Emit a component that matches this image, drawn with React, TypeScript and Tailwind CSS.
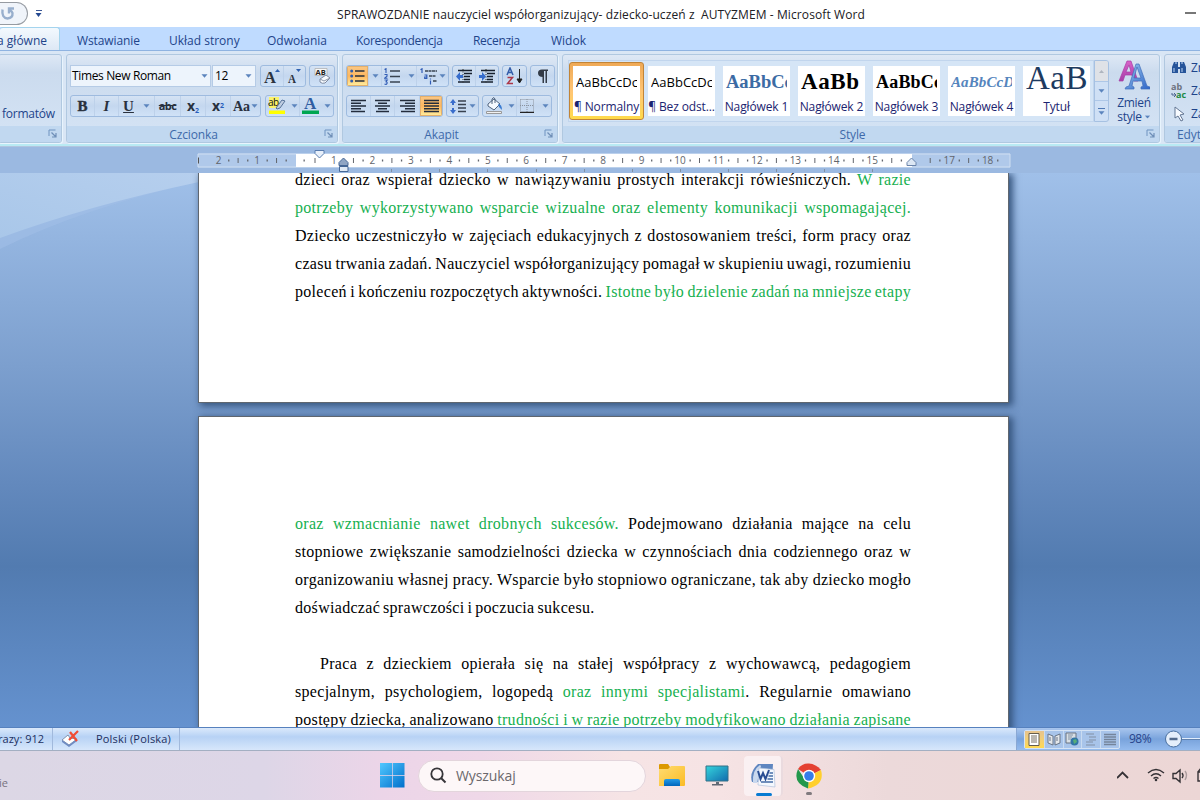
import type { ReactNode } from "react";

const Arrow = ({ className = "" }: { className?: string }) => (
  <svg className={`shrink-0 ${className}`} width="7" height="4" viewBox="0 0 7 4">
    <path d="M.5 .3h6L3.5 3.7z" fill="#5b84bd" />
  </svg>
);

const Launcher = () => (
  <svg width="9" height="9" viewBox="0 0 9 9" className="absolute right-[4px] top-[3px]">
    <path d="M1 7V1h6.5" fill="none" stroke="#6f93c0" />
    <path d="M8 4v4H4M3.5 3.5l4 4" fill="none" stroke="#6f8fb8" strokeWidth="1.2" />
  </svg>
);

function Group({ label, width, body, children }: { label: string; width: string; body: string; children?: ReactNode }) {
  return (
    <div className={`flex h-[89px] shrink-0 flex-col overflow-hidden rounded-[3px] border border-[#b0c8e0] bg-gradient-to-b from-[#dee8f5] via-[#cbdbee] via-20% to-[#d5e4f5] shadow-[1px_1px_0_#e8f4fd] ${width}`}>
      <div className={`h-[71px] shrink-0 ${body}`}>{children}</div>
      <div className="relative h-4 shrink-0 bg-[#c1d8f0] pr-[17px] text-center text-[12px] leading-[17px] tracking-[-0.15px] text-[#3e6aaa]">
        {label}
        <Launcher />
      </div>
    </div>
  );
}

const Set = ({ w, children }: { w: string; children: ReactNode }) => (
  <div className={`flex h-[22px] shrink-0 items-center overflow-hidden rounded-[3px] border border-[#9ebbdf] bg-gradient-to-b from-[#d5e3f4] via-[#c4d7ef] to-[#d0e2f7] ${w}`}>{children}</div>
);

const Cell = ({ w, on = false, children }: { w: string; on?: boolean; children: ReactNode }) => (
  <div className={`flex h-full shrink-0 items-center justify-center border-r border-[#bdd1ea] last:border-r-0 ${w} ${on ? "bg-gradient-to-b from-[#fbc885] via-[#fdb75f] to-[#fff0a0] shadow-[inset_0_0_0_1px_#e3b06d]" : ""}`}>
    {children}
  </div>
);

function Align({ d }: { d: string }) {
  return (
    <svg width="15" height="14" viewBox="0 0 15 14">
      <path d={d} stroke="#222c3c" strokeWidth="1.4" />
    </svg>
  );
}

function Indent({ right = false }: { right?: boolean }) {
  return (
    <svg width="17" height="15" viewBox="0 0 17 15">
      <path d="M2 1.5h14M8 4.500h8M8 7.500h6M8 10.500h6M2 13h12" stroke="#17202e" strokeWidth="1.7" />
      <path d="M7 0v15" stroke="#333" strokeDasharray="1 1.500" />
      <path d={right ? "M0 6h3V3l4 4.500L3 12V9H0z" : "M7 6H4V3L0 7.500 4 12V9h3z"} fill="#376dcc" />
    </svg>
  );
}

function FontGroup() {
  return (
    <Group label="Czcionka" width="w-[272px]" body="flex flex-col gap-2 pl-[3px] pt-[10px]">
      <div className="flex">
        <div className="flex h-[22px] w-[141px] items-center justify-between border border-[#b5cbe6] bg-[#edf4fc] pl-[1px] pr-[2px] text-[12px] tracking-[-0.36px] text-black">
          <span>Times New Roman</span> <Arrow />
        </div>
        <div className="ml-px flex h-[22px] w-[44px] items-center justify-between border border-[#b5cbe6] bg-[#edf4fc] pl-[2px] pr-[3px] text-[12px] tracking-[-0.3px] text-black">
          <span>12</span> <Arrow />
        </div>
        <div className="w-1" />
        <Set w="w-[46px]">
          <Cell w="w-[23px]">
            <svg width="19" height="18" viewBox="0 0 19 18"><text x="1" y="15.500" fontSize="17" fontWeight="bold" fontFamily="Liberation Serif, serif" fill="#2c333e" textLength="12" lengthAdjust="spacingAndGlyphs">A</text><path d="M12 5l2.500-3L17 5z" fill="#2f61b0" /></svg>
          </Cell>
          <Cell w="w-[22px]">
            <svg width="19" height="18" viewBox="0 0 19 18"><text x="2" y="15.500" fontSize="13" fontWeight="bold" fontFamily="Liberation Serif, serif" fill="#2c333e" textLength="8" lengthAdjust="spacingAndGlyphs">A</text><path d="M10 2h5l-2.500 3z" fill="#2f61b0" /></svg>
          </Cell>
        </Set>
        <div className="w-[3px]" />
        <Set w="w-[26px]">
          <Cell w="w-[24px]">
            <svg width="18" height="18" viewBox="0 0 18 18"><path d="M2 1.500h12v7H2z" fill="#f7f7f5" stroke="#aaa" strokeWidth=".7" /><text x="2.500" y="7.700" fontSize="7.500" fontWeight="bold" fill="#222">AB</text><path d="M7 12l6-4 4 3-5 5q-3 1-5-1z" fill="#f8fbff" stroke="#7d89a0" /><path d="M7 12l4 2 6-3" fill="none" stroke="#8d98aa" /></svg>
          </Cell>
        </Set>
      </div>
      <div className="flex font-['Liberation_Serif',serif] text-[15px] font-bold text-[#29313e]">
        <Set w="w-[191px]">
          <Cell w="w-[24px]"><span className="[-webkit-text-stroke:0.4px_#29313e]">B</span></Cell>
          <Cell w="w-[24px]"><span className="italic">I</span></Cell>
          <Cell w="w-[36px]"><span className="mr-[9px] underline">U</span><Arrow /></Cell>
          <Cell w="w-[26px]"><span className="font-['Open_Sans',sans-serif] text-[11px] tracking-[-0.6px] line-through">abc</span></Cell>
          <Cell w="w-[25px]"><span className="font-['Open_Sans',sans-serif] text-[14px] leading-none">x<sub className="text-[7px] text-[#295dbc]">2</sub></span></Cell>
          <Cell w="w-[25px]"><span className="font-['Open_Sans',sans-serif] text-[14px] leading-none">x<sup className="text-[7px] text-[#295dbc]">2</sup></span></Cell>
          <Cell w="w-[29px]"><span className="text-[14px]">Aa</span><Arrow className="ml-px" /></Cell>
        </Set>
        <div className="w-1" />
        <Set w="w-[69px]">
          <Cell w="w-[34px]">
            <svg width="18" height="18" viewBox="0 0 18 18"><path d="M1 0h10v11H1z" fill="#fbf36b" /><text x="0" y="9" fontSize="10" fontWeight="400" fontFamily="Open Sans, sans-serif" fill="#111" textLength="11">ab</text><path d="M8 11l6-8 3 1-5 7-3 1z" fill="#bfcde1" stroke="#577399" /><path d="M1 13.500h16V17H1z" fill="#ff0" /></svg>
            <Arrow className="ml-[5px]" />
          </Cell>
          <Cell w="w-[33px]">
            <svg width="17" height="18" viewBox="0 0 17 18"><text x="2" y="12" fontSize="17" fontFamily="Liberation Serif, serif" fill="#305da1" textLength="12">A</text><path d="M0 13.500h17V17H0z" fill="#00a651" /></svg>
            <Arrow className="ml-[5px]" />
          </Cell>
        </Set>
      </div>
    </Group>
  );
}

function ParagraphGroup() {
  return (
    <Group label="Akapit" width="w-[216px]" body="flex flex-col gap-2 pl-[3px] pt-[10px]">
      <div className="flex">
        <Set w="w-[103px]">
          <Cell w="w-[22px]" on>
            <svg width="15" height="14" viewBox="0 0 15 14"><path d="M5 2h9.500M5 7h9.500M5 12h9.500" stroke="#27303c" strokeWidth="1.500" /><g fill="#315ca9"><circle cx="1.700" cy="2" r="1.500" /><circle cx="1.700" cy="7" r="1.500" /><circle cx="1.700" cy="12" r="1.500" /></g></svg>
          </Cell>
          <Cell w="w-[13px]"><Arrow /></Cell>
          <Cell w="w-[35px]">
            <svg width="17" height="17" viewBox="0 0 17 17"><path d="M6 3h10M6 8.500h10M6 14h10" stroke="#394351" strokeWidth="1.300" /><g fill="none" stroke="#315cb5" strokeWidth="1.100"><path d="M.5 1.500l1.500-.8V5M.5 6.500h2.500v1.700l-2.500 2h3M.5 12h2.800L2 13.800q1.500.2 1 1.700t-2.500.5" /></g></svg>
            <Arrow className="ml-[7px]" />
          </Cell>
          <Cell w="w-[31px]">
            <svg width="18" height="17" viewBox="0 0 18 17"><path d="M5 3h12M9 8h7M13 13h4" stroke="#394351" strokeWidth="1.300" strokeDasharray="3 .5" /><g fill="none" stroke="#315cb5" strokeWidth="1.200"><path d="M.5 1.700L2 .8V5M4.500 7h2.300v3.500H4.700V9h2M10.500 12.500v4M10.500 10.500v1" /></g></svg>
            <Arrow className="ml-px" />
          </Cell>
        </Set>
        <div className="w-[3px]" />
        <Set w="w-[47px]">
          <Cell w="w-[23px]"><Indent /></Cell>
          <Cell w="w-[22px]"><Indent right /></Cell>
        </Set>
        <div className="w-[3px]" />
        <Set w="w-[25px]">
          <Cell w="w-[23px]"><svg width="17" height="18" viewBox="0 0 17 18"><g fill="none" strokeWidth="1.500"><path d="M1 8l3-7 3 7M2.200 5.500h3.600" stroke="#315ca9" /><path d="M1.500 10.500h5l-5 6h5.500" stroke="#ac3748" /></g><path d="M13.500 2v13M11 12l2.500 4 2.500-4z" stroke="#222" fill="#222" /></svg></Cell>
        </Set>
        <div className="w-[3px]" />
        <Set w="w-[25px]">
          <Cell w="w-[23px]"><svg width="12" height="15" viewBox="0 0 12 15"><path d="M6 8Q1 8 1 4t5-3.500h5V2h-1v12H8.500V2H7v12H5.500V8z" fill="#333b47" /></svg></Cell>
        </Set>
      </div>
      <div className="flex">
        <Set w="w-[97px]">
          <Cell w="w-[24px]"><Align d="M0 1.500h15M0 4.250h10M0 7h15M0 9.750h10M0 12.500h14" /></Cell>
          <Cell w="w-[24px]"><Align d="M0 1.500h15M3 4.250h9M0 7h15M3 9.750h9M1 12.500h13" /></Cell>
          <Cell w="w-[25px]"><Align d="M0 1.500h15M5 4.250h10M0 7h15M5 9.750h10M1 12.500h14" /></Cell>
          <Cell w="w-[22px]" on><Align d="M0 1.500h15M0 4.250h15M0 7h15M0 9.750h15M0 12.500h15" /></Cell>
        </Set>
        <div className="w-[3px]" />
        <Set w="w-[33px]">
          <Cell w="w-[31px]">
            <svg width="17" height="17" viewBox="0 0 17 17"><path d="M8 3h8M8 6.500h8M8 10h8M8 13.500h8" stroke="#384250" strokeWidth="1.300" /><path d="M0 5l3-4 3 4H4v2H2V5zM0 12l3 4 3-4H4v-2H2v2z" fill="#3a6dcb" /></svg>
            <Arrow className="ml-[2px]" />
          </Cell>
        </Set>
        <div className="w-[3px]" />
        <Set w="w-[70px]">
          <Cell w="w-[34px]">
            <svg width="18" height="18" viewBox="0 0 18 18"><path d="M3 7l6-5 6 5-6 6-6-4z" fill="#f5f9ff" stroke="#51657f" /><path d="M7 7V2q2-3 3 0v4" fill="none" stroke="#51657f" /><path d="M13 7q4 0 4 6l-3-3z" fill="#397bd2" /><path d="M1.500 14.500h15v2h-15z" fill="#f1f1f1" stroke="#999" /></svg>
            <Arrow className="ml-[5px]" />
          </Cell>
          <Cell w="w-[34px]">
            <svg width="14" height="14" viewBox="0 0 14 14"><path d="M.5 .5h13v12M.5 .5v12M7 0v13M0 6.500h14" fill="none" stroke="#8a929e" strokeDasharray="1 1" /><path d="M0 13.500h14" stroke="#222" strokeWidth="1.400" /></svg>
            <Arrow className="ml-[8px]" />
          </Cell>
        </Set>
      </div>
    </Group>
  );
}

const styles = [
  { name: "¶ Normalny", sample: "AaBbCcDc", cls: "text-[13px] text-black tracking-[0.02px]" },
  { name: "¶ Bez odst...", sample: "AaBbCcDc", cls: "text-[13px] text-black tracking-[0.02px]" },
  { name: "Nagłówek 1", sample: "AaBbCc", cls: "font-['Liberation_Serif',serif] text-[18.5px] font-bold text-[#3c6ba4]" },
  { name: "Nagłówek 2", sample: "AaBb", cls: "font-['Liberation_Serif',serif] text-[23px] font-bold text-black tracking-[0.6px]" },
  { name: "Nagłówek 3", sample: "AaBbCc", cls: "font-['Liberation_Serif',serif] text-[18px] font-bold text-black tracking-[0.2px]" },
  { name: "Nagłówek 4", sample: "AaBbCcD", cls: "font-['Liberation_Serif',serif] text-[15px] font-bold italic text-[#5585bd] tracking-[0.1px]" },
  { name: "Tytuł", sample: "AaB", cls: "relative -top-[4px] font-['Liberation_Serif',serif] text-[33px] text-[#1d3a5f] tracking-[0.5px]" },
];

function StyleGroup() {
  return (
    <Group label="Style" width="w-[598px]" body="flex">
      <div className="ml-[5px] mt-[5px] flex h-[62px] w-[526px] border border-[#c1d5ed] bg-[#d5e5f6]">
        {styles.map((s, i) => (
          <div key={s.name} className={`mt-px h-[58px] w-[75px] shrink-0 p-[3px] ${i === 0 ? "rounded-[3px] border border-[#c18438] bg-gradient-to-b from-[#efa956] via-[#ffc574] to-[#ffda49]" : "border border-transparent"}`}>
            <div className="flex h-[50px] w-[67px] flex-col items-center bg-white">
              <div className="flex h-[32px] w-[61px] items-center overflow-hidden whitespace-nowrap">
                <span className={`leading-[30px] ${s.cls}`}>{s.sample}</span>
              </div>
              <div className="w-full whitespace-nowrap text-center text-[12px] leading-[18px] tracking-[-0.12px] text-[#1b2470]">{s.name}</div>
            </div>
          </div>
        ))}
      </div>
      <div className="mt-[5px] flex h-[62px] w-[15px] flex-col overflow-hidden rounded-r-[3px] border border-[#a6c1e2] bg-[#cfe0f5]">
        <div className="flex h-[20px] items-center justify-center bg-[#dfe2e7]"><svg width="7" height="4"><path d="M1 4l2.500-3L6 4z" fill="#aeb5bf" /></svg></div>
        <div className="flex h-[20px] items-center justify-center border-y border-[#adc7e7]"><Arrow /></div>
        <div className="flex h-[20px] flex-col items-center justify-center gap-[2px]"><div className="h-px w-[7px] bg-[#4f79b5]" /><Arrow /></div>
      </div>
      <div className="flex w-[50px] flex-col items-center pt-[5px] text-center text-[12px] leading-[14px] tracking-[-0.3px] text-[#1e448a]">
        <svg width="32" height="31" viewBox="0 0 32 31">
          <defs>
            <linearGradient id="violet" x2="0" y2="1"><stop stopColor="#d862c8" /><stop offset="1" stopColor="#a640a8" /></linearGradient>
            <linearGradient id="azure" x2="1" y2="1"><stop stopColor="#9ac7f0" /><stop offset="1" stopColor="#2e65c7" /></linearGradient>
          </defs>
          <path d="M1 21L9 1h4l7 20h-4l-2-6H7l-2 6zM8 12h5l-2-7z" fill="url(#violet)" stroke="#a83ca5" strokeWidth=".7" />
          <path d="M7 29l1-2 3-1 7-22h3l8 22 3 1v2h-9v-2l2-1-1-5h-9l-1 5 2 1v2zM16 18h7l-4-11z" fill="url(#azure)" stroke="#416fba" strokeWidth=".7" />
        </svg>
        <div className="mt-[5px]">Zmień</div>
        <div className="flex items-center gap-[2px]">style <Arrow className="scale-90" /></div>
      </div>
    </Group>
  );
}

function EditGroup() {
  return (
    <div className="flex h-[89px] w-[60px] shrink-0 flex-col overflow-hidden rounded-[3px] border border-[#b0c8e0] bg-gradient-to-b from-[#dee8f5] via-[#cbdbee] via-20% to-[#d5e4f5] text-[12px] text-[#1e448a]">
      <div className="flex h-[71px] shrink-0 flex-col gap-[2px] pl-[6px] pt-[2px]">
        <div className="flex h-[21px] items-center gap-[4px]">
          <svg width="16" height="15" viewBox="0 0 16 15"><path d="M1 13V7l2-5h4v5h2V2h4l2 5v6H9V9H7v4z" fill="#26549a" /><path d="M3 8v4M11 8v4M4 3h2M10 3h2" stroke="#bed7f5" /></svg>Zn
        </div>
        <div className="flex h-[21px] items-center gap-[4px]">
          <svg width="16" height="18" viewBox="0 0 16 18"><text x="0" y="8" fontSize="9" fontWeight="bold" fill="#6d7380">ab</text><text x="5" y="16" fontSize="9" fontWeight="bold" fill="#218a45">ac</text><path d="M1 11v2h4M3 11l2 2-2 2" fill="none" stroke="#4c6590" /></svg>Za
        </div>
        <div className="flex h-[21px] items-center gap-[4px]">
          <svg width="16" height="16" viewBox="0 0 16 16"><path d="M4 1v11l3-2 3 5 2-1-3-5 4-1z" fill="#f8fbff" stroke="#637693" /></svg>Za
        </div>
      </div>
      <div className="h-4 shrink-0 bg-[#c1d8f0] pl-[12px] leading-[17px] tracking-[-0.1px] text-[#3e6aaa]">Edyt</div>
    </div>
  );
}

const marks = Array.from({ length: 22 }, (_, i) => i - 2);

function Ruler() {
  return (
    <div className="relative h-[27px] shrink-0 border-t border-[#b2c5df] bg-[#9bb9e1]">
      <svg width="1200" height="27" viewBox="0 0 1200 27" className="block">
        <path d="M198 6.500h812v14H198z" fill="#b0c9ea" />
        <path d="M198 7h812v13H198z" fill="none" stroke="#d0dff2" />
        <path d="M296 7h616v13H296z" fill="#fff" />
        <g fill="#62656c" fontSize="10" textAnchor="middle">
          {marks.map((n) => {
            const x = 295.5 + n * 38.45;
            return (
              <g key={n}>
                {n !== 0 && n !== 16 && n < 19 && <text x={x} y="17" fontSize="10">{Math.abs(n)}</text>}
                {n < 18 && <rect x={x + 19} y="11" width="1" height="5" />}
                {n < 19 && n !== 0 && n !== 16 && <rect x={x + 9.5} y="12.500" width="1.300" height="2" />}
                {n < 18 && n !== 0 && <rect x={x + 28.500} y="12.500" width="1.300" height="2" />}
                {n === 0 && <rect x={x + 8} y="12.500" width="1.300" height="2" />}
              </g>
            );
          })}
        </g>
        <path d="M198.500 10.500v6" stroke="#555" />
        {[391, 439, 487, 536, 584, 632, 680, 728, 776, 824, 872].map((x) => <path key={x} d={`M${x}.500 22v3`} stroke="#8290a3" />)}
        <path d="M315 3.500h9v3l-4.500 4.500L315 6.500z" fill="#e8f0fb" stroke="#587cae" />
        <path d="M339 18.500v-3l4.500-4.500 4.500 4.500v3z" fill="#8fa5c4" stroke="#456796" />
        <path d="M339.500 19.500h8.500v5h-8.500z" fill="#dfe9f5" stroke="#456796" />
        <path d="M907 18.500v-3l4.500-4.500 4.500 4.500v3z" fill="#dce7f4" stroke="#6a84aa" />
      </svg>
    </div>
  );
}

const Line = ({ children, last = false, indent = false }: { children: ReactNode; last?: boolean; indent?: boolean }) => (
  <div className={`h-[28px] whitespace-nowrap tracking-[0.3px] [word-spacing:-1.3px] ${last ? "" : "[text-align-last:justify]"} ${indent ? "pl-[25px]" : ""}`}>{children}</div>
);
const Green = ({ children }: { children: ReactNode }) => <span className="text-[#16b050]">{children}</span>;

function Document() {
  return (
    <div className="relative flex h-[554px] shrink-0 flex-col items-start overflow-hidden bg-[linear-gradient(180deg,#a0c0e9_0%,#7c9fce_35%,#6389bd_56%,#527bb0_71%,#6592cf_100%)]">
      <svg className="absolute left-0 top-0" width="199" height="80" viewBox="0 0 199 80">
        <defs><linearGradient id="wave" x1="0" y1="1" x2="1" y2="0"><stop stopColor="#a9c7e9" /><stop offset="1" stopColor="#b6cfee" /></linearGradient></defs>
        <path d="M0 0h199v9Q85 34 0 76z" fill="#a3c0e7" opacity=".55" />
        <path d="M0 0h199v9Q90 32 0 65z" fill="url(#wave)" />
      </svg>
      <div className="relative ml-[198px] h-[230px] w-[811px] shrink-0 overflow-visible border border-t-0 border-[#5f666f] bg-white pl-[96px] pr-[97px] font-['Liberation_Serif',serif] text-[16px] leading-[28px] text-black shadow-[3px_2px_7px_1px_#36557f]">
        <div className="mt-[-7px]">
          <Line>dzieci oraz wspierał dziecko w nawiązywaniu prostych interakcji rówieśniczych. <Green>W razie</Green></Line>
          <Line><Green>potrzeby wykorzystywano wsparcie wizualne oraz elementy komunikacji wspomagającej.</Green></Line>
          <Line>Dziecko uczestniczyło w zajęciach edukacyjnych z dostosowaniem treści, form pracy oraz</Line>
          <Line>czasu trwania zadań. Nauczyciel współorganizujący pomagał w skupieniu uwagi, rozumieniu</Line>
          <Line>poleceń i kończeniu rozpoczętych aktywności. <Green>Istotne było dzielenie zadań na mniejsze etapy</Green></Line>
        </div>
      </div>
      <div className="relative ml-[198px] mt-[13px] h-[340px] w-[811px] shrink-0 border border-[#5f666f] bg-white pl-[96px] pr-[97px] pt-[93px] font-['Liberation_Serif',serif] text-[16px] leading-[28px] text-black shadow-[3px_2px_7px_1px_#36557f]">
        <Line><Green>oraz wzmacnianie nawet drobnych sukcesów.</Green> Podejmowano działania mające na celu</Line>
        <Line>stopniowe zwiększanie samodzielności dziecka w czynnościach dnia codziennego oraz w</Line>
        <Line>organizowaniu własnej pracy. Wsparcie było stopniowo ograniczane, tak aby dziecko mogło</Line>
        <Line last>doświadczać sprawczości i poczucia sukcesu.</Line>
        <Line last>&nbsp;</Line>
        <Line indent>Praca z dzieckiem opierała się na stałej współpracy z wychowawcą, pedagogiem</Line>
        <Line>specjalnym, psychologiem, logopedą <Green>oraz innymi specjalistami</Green>. Regularnie omawiano</Line>
        <Line>postępy dziecka, analizowano <Green>trudności i w razie potrzeby modyfikowano działania zapisane</Green></Line>
      </div>
    </div>
  );
}

function StatusBar() {
  return (
    <div className="flex h-6 shrink-0 items-center overflow-hidden border-b border-t border-b-[#a3afc2] border-t-[#5681be] bg-gradient-to-b from-[#dbe9fb] via-[#b7d2f5] via-40% to-[#d7e7fb] text-[11px] text-[#1c2f60]">
      <div className="flex h-full w-[53px] items-center justify-end border-r border-[#a1b9dc] pr-[8px]"><span className="whitespace-nowrap">Wyrazy: 912</span></div>
      <div className="flex h-full w-[127px] items-center border-r border-[#a1b9dc] pl-[8px]">
        <svg width="18" height="18" viewBox="0 0 18 18"><path d="M1 10l6-5 2 3 7 1-8 6z" fill="#fff" stroke="#8392ae" /><path d="M1 10l7 5 8-6v2l-8 6-7-5z" fill="#6f8bc2" /><path d="M9 2l7 9M17 1L8 10" stroke="#f04b35" strokeWidth="2.200" /></svg>
        <span className="ml-[17px] whitespace-nowrap tracking-[0.18px]">Polski (Polska)</span>
      </div>
      <div className="h-full w-[837px] shrink-0 border-r border-[#8aa8d4]" />
      <div className="flex h-full w-[183px] shrink-0 items-center bg-gradient-to-b from-[#a9c6ee] via-[#79a3dc] via-50% to-[#94bbee] pl-[7px]">
        <div className="flex h-[19px] w-[96px] shrink-0 items-center rounded-[2px] border border-[#d5e3f5] bg-[#a8c4ea]">
          <div className="flex h-full w-[19px] items-center justify-center bg-gradient-to-b from-[#e6c38e] to-[#ffd950]"><svg width="12" height="13" viewBox="0 0 12 13"><path d="M1 .5h10v12H1z" fill="#fff" stroke="#655c4c" /><path d="M3 3h6M3 5h6M3 7h6M3 9h6" stroke="#776f62" /></svg></div>
          <div className="flex h-full w-[19px] items-center justify-center border-l border-[#c9dbf1]"><svg width="14" height="13" viewBox="0 0 14 13"><path d="M1 1l5 2v9L1 10zM13 1L8 3v9l5-2z" fill="#e4e7eb" stroke="#687587" /><path d="M3 4v4M10 4v4" stroke="#6b7788" /></svg></div>
          <div className="flex h-full w-[19px] items-center justify-center border-l border-[#c9dbf1]"><svg width="14" height="14" viewBox="0 0 14 14"><path d="M1 1h10v10H1z" fill="#d8dfe5" stroke="#697382" /><path d="M3 3h5M3 5h4M3 7h3" stroke="#8493a5" /><circle cx="9.500" cy="9.500" r="4" fill="#3275a5" /><path d="M8 8l3-1 1 3-3 2z" fill="#55ad78" /></svg></div>
          <div className="flex h-full w-[19px] items-center justify-center border-l border-[#c9dbf1]"><svg width="12" height="13" viewBox="0 0 12 13"><path d="M1 1h8M4 4h7M4 7h7M1 9h7M1 12h9" stroke="#8290a5" /></svg></div>
          <div className="flex h-full w-[19px] items-center justify-center border-l border-[#c9dbf1]"><svg width="12" height="13" viewBox="0 0 12 13"><path d="M0 1.500h12M0 4h12M0 6.500h12M0 9h12M0 11.500h12" stroke="#74849b" strokeWidth="1.300" /></svg></div>
        </div>
        <span className="ml-[9px] w-[37px] text-[12px] tracking-[-0.5px] text-[#28448b]">98%</span>
        <svg className="shrink-0" width="36" height="18" viewBox="0 0 36 18"><path d="M18 8.500h18" stroke="#e1edfc" /><path d="M18 9.500h18" stroke="#6082b0" /><circle cx="9.500" cy="9" r="8" fill="#e4eefb" stroke="#476e9f" /><path d="M5.500 9h8" stroke="#526a8c" strokeWidth="2.500" /></svg>
      </div>
    </div>
  );
}

function Taskbar() {
  return (
    <div className="flex h-[49px] shrink-0 items-center bg-[linear-gradient(90deg,#dcd7e5_0%,#ddd6e7_22%,#ecd5e8_32%,#efd8e8_40%,#f6e4e5_52%,#f6e3e4_60%,#ecd9da_74%,#ecd6d5_100%)]">
      <div className="h-full w-[380px] pt-[24px] text-[11px] text-[#77727e]"><span className="ml-[-1px]">ie</span></div>
      <svg width="25" height="25" viewBox="0 0 25 25">
        <defs><linearGradient id="win" x2="1" y2="1"><stop stopColor="#51c8ff" /><stop offset="1" stopColor="#006fcb" /></linearGradient></defs>
        <path d="M0 0h12v12H0zM12.700 0H24.500v12H12.700zM0 12.700h12v11.800H0zM12.700 12.700h11.800v11.800H12.700z" fill="url(#win)" />
      </svg>
      <div className="ml-[13px] flex h-8 w-[228px] items-center rounded-full border border-[#e3d5dc] bg-[#fdf7f8] pl-[11px] text-[14px] text-[#6b686c]">
        <svg width="17" height="17" viewBox="0 0 17 17"><circle cx="7" cy="7" r="5.700" fill="none" stroke="#363539" strokeWidth="1.800" /><path d="M11 11l4.500 4.500" stroke="#363539" strokeWidth="2" /></svg>
        <span className="ml-[9px] tracking-[-0.1px]">Wyszukaj</span>
      </div>
      <svg className="ml-[13px]" width="26" height="25" viewBox="0 0 26 25">
        <defs><linearGradient id="folder" x2="1" y2="1"><stop stopColor="#ffdc72" /><stop offset="1" stopColor="#fbbb24" /></linearGradient><linearGradient id="pocket" x2="0" y2="1"><stop stopColor="#249be8" /><stop offset="1" stopColor="#0065bb" /></linearGradient></defs>
        <path d="M0 2q0-1 1-1h8l2 3v4H0z" fill="#dc9900" /><path d="M0 6h9l3-3h13q1 0 1 1v18q0 1-1 1H0z" fill="url(#folder)" /><path d="M5 23v-5q0-2 2-2h12q2 0 2 2v5z" fill="url(#pocket)" />
      </svg>
      <svg className="ml-[20px]" width="24" height="23" viewBox="0 0 24 23">
        <defs><linearGradient id="screen" x2="1" y2="1"><stop stopColor="#35d5dc" /><stop offset="1" stopColor="#116bae" /></linearGradient></defs>
        <path d="M1 2h22v15H1z" fill="url(#screen)" stroke="#357186" /><path d="M11 18h3v2h4v1.500H7V20h4z" fill="#626974" />
      </svg>
      <div className="relative ml-[15px] flex h-10 w-[39px] items-center justify-center rounded-[4px] border-r-2 border-[#eadbdf] bg-[#faf0f2]">
        <svg width="26" height="26" viewBox="0 0 26 26"><path d="M8 1h15l-1 18H2Q-1 9 8 1" fill="#5f86c0" /><path d="M10 2Q2 7 3 20h4L11 3z" fill="#c9d8ee" /><path d="M9 5l15 1.500L25 24 8 22z" fill="#f4f8fe" stroke="#b2c2db" strokeWidth=".7" /><path d="M8 8l2.500 8 2.500-6 2.500 6L19 7" fill="none" stroke="#294d93" strokeWidth="2" /><path d="M19.500 10h3.500M18.500 13H23M17.500 16H23M11 19h12" stroke="#466ca7" strokeWidth="1.300" /></svg>
        <div className="absolute bottom-0 left-[12px] h-[3px] w-4 rounded-full bg-[#087bd2]" />
      </div>
      <div className="relative ml-[13px]">
        <svg width="26" height="26" viewBox="0 0 26 26"><path d="M13 13L2 6Q6 0 13 .500T25 7z" fill="#e44132" /><path d="M13 13L25 7q4 15-13 18.500z" fill="#ffcf2d" /><path d="M13 13l-1 12.500Q-4 20 2 6l6 9z" fill="#23984c" /><circle cx="13" cy="13" r="6.200" fill="#fff" /><circle cx="13" cy="13" r="4.800" fill="#367de9" /></svg>
        <div className="absolute bottom-[-6px] left-[10px] h-[3px] w-[6px] rounded-full bg-[#807a7e]" />
      </div>
      <div className="grow" />
      <svg width="83" height="22" viewBox="0 0 83 22" fill="none" stroke="#353236">
        <path d="M0 13l5.500-5.500L11 13" strokeWidth="1.800" /><g strokeWidth="1.400"><path d="M31 8q8-7 16 0M34 11q5-4.500 10 0M36.500 13.500q2.500-2 5 0" /><circle cx="39" cy="15" r=".6" /><path d="M56 8.500h3l4-3.500v12l-4-3.500h-3zM65 8q2 2.500 0 5" /><path d="M68 6q3 4 0 9" opacity=".35" /><path d="M85 7h-4v9h4M81 7l3-4" /></g>
      </svg>
    </div>
  );
}

export default function App() {
  return (
    <div className="flex h-[800px] w-[1200px] flex-col overflow-hidden font-['Open_Sans','Noto_Sans',sans-serif]">
      <div className="relative flex h-[27px] shrink-0 items-center bg-white text-[12px] text-[#202024]">
        <div className="flex h-[23px] w-[28px] items-center rounded-r-full border border-l-0 border-[#969ba2] bg-[#f0f4fa]"><svg width="18" height="18" viewBox="0 0 18 18"><path d="M2.500 4.500Q1.500 13 7.500 13.500 13 13 12.500 8 12 6 9.500 5M14 3.500H9v5" fill="none" stroke="#98afcd" strokeWidth="2.400" /></svg></div>
        <svg className="ml-[7px]" width="8" height="9" viewBox="0 0 8 9"><path d="M1 1.500h6" stroke="#3c5794" /><path d="M.5 4h6L3.500 8z" fill="#244891" /></svg>
        <span className="ml-[294px] whitespace-pre pt-[2px] text-[12px] tracking-[0.095px]">SPRAWOZDANIE nauczyciel współorganizujący- dziecko-uczeń z  AUTYZMEM - Microsoft Word</span>
        <div className="absolute right-[4px] top-[12px] h-[2px] w-[11px] bg-[#777]" />
      </div>
      <div className="flex h-6 shrink-0 items-end border-b border-[#8fb3e1] bg-[#bfdbff] text-[12px] text-[#1e448a]">
        <div className="flex h-[23px] w-[60px] items-center justify-end rounded-t-[3px] border-r border-t border-[#a4d4ee] bg-gradient-to-b from-[#f3f9fe] to-[#dde8f5] pr-[12px] pt-[4px]"><span className="whitespace-nowrap">Narzędzia główne</span></div>
        <div className="flex h-[23px] items-center pt-[5px]">
          <span className="ml-[17px] w-[92px] tracking-[-0.1px]">Wstawianie</span><span className="w-[98px]">Układ strony</span><span className="w-[89px]">Odwołania</span><span className="w-[117px] whitespace-nowrap tracking-[-0.3px]">Korespondencja</span><span className="w-[78px] tracking-[-0.3px]">Recenzja</span><span>Widok</span>
        </div>
      </div>
      <div className="flex h-[95px] shrink-0 gap-[4px] overflow-hidden border-b-2 border-b-[#b9eaf3] bg-[#d9e6f5] pt-[3px]">
        <Group label="" width="ml-[-2px] w-[64px]" body="flex pt-[53px]"><span className="ml-[3px] text-[12px] leading-none tracking-[-0.25px] text-[#1e448a]">formatów</span></Group>
        <FontGroup />
        <ParagraphGroup />
        <StyleGroup />
        <EditGroup />
      </div>
      <Ruler />
      <Document />
      <StatusBar />
      <Taskbar />
    </div>
  );
}
